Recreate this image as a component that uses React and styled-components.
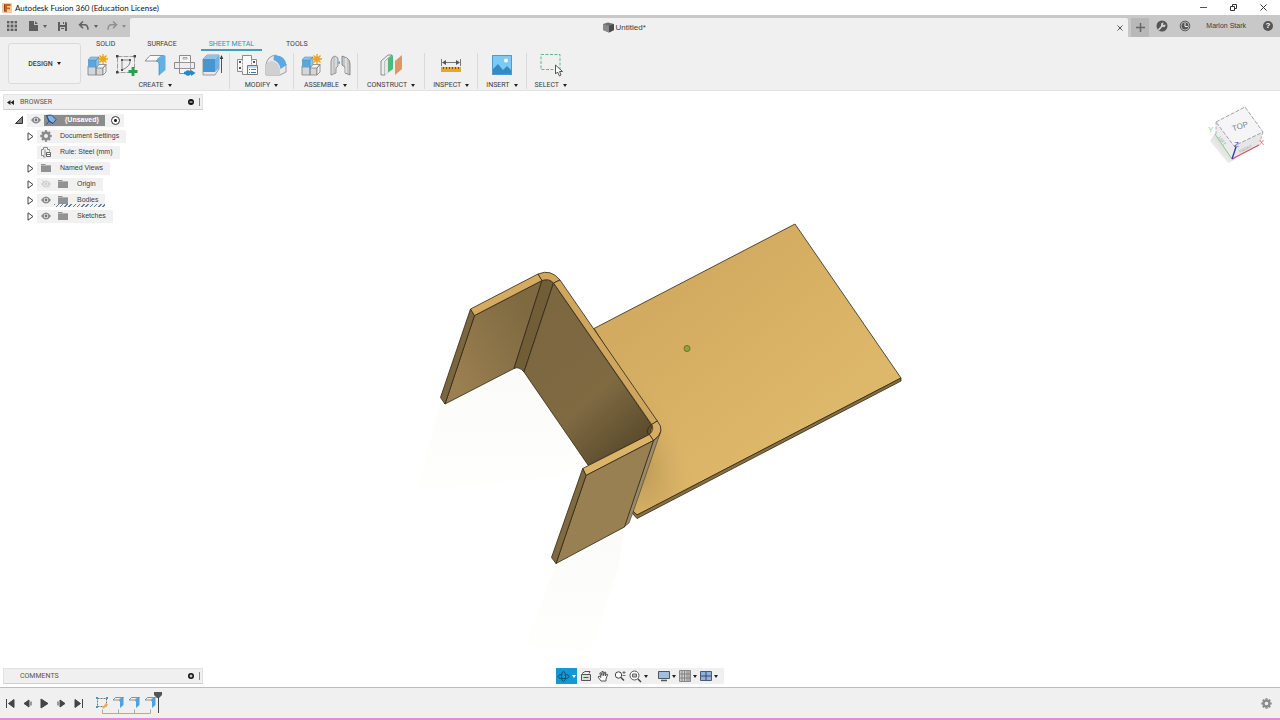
import React, { useState } from 'react';
import styled, { createGlobalStyle, css } from 'styled-components';

const TABS = ['SOLID', 'SURFACE', 'SHEET METAL', 'TOOLS'];

const TREE = [
  { name: 'Document Settings', icon: 'gear', arrow: true },
  { name: 'Rule: Steel (mm)', icon: 'rule' },
  { name: 'Named Views', icon: 'folder', arrow: true },
  { name: 'Origin', icon: 'folder', arrow: true, eye: 'off' },
  { name: 'Bodies', icon: 'folder', arrow: true, eye: 'on', hatched: true },
  { name: 'Sketches', icon: 'folder', arrow: true, eye: 'on' },
];

/* ---------- icons ---------- */

const Svg = ({ w = 12, h = w, children, ...rest }) => (
  <svg
    width={w}
    height={h}
    viewBox={`0 0 ${w} ${h}`}
    fill="none"
    aria-hidden="true"
    {...rest}
  >
    {children}
  </svg>
);

const Caret = ({ color = '#222' }) => (
  <Svg w={4} h={3}>
    <path d="M0 0h4L2 3z" fill={color} />
  </Svg>
);

const LogoIcon = () => (
  <Svg w={10}>
    <rect width="10" height="10" rx="1" fill="#f6c9a0" />
    <path d="M2 1h6.500v2H5v1.500h3v1.800H5V9H3z" fill="#c8641c" />
    <path d="M2 1l1 1v7l-1-1z" fill="#8c3e0c" />
  </Svg>
);

const AppsIcon = () => (
  <Svg w={10}>
    {[0, 4, 8].map(y =>
      [0, 4, 8].map(x => (
        <rect key={`${x}${y}`} x={x - 0.4} y={y - 0.4} width="2.800" height="2.800" fill="#5f5f5f" />
      ))
    )}
  </Svg>
);

const FileIcon = () => (
  <Svg>
    <path d="M2 1h5v4h4v6H2z" fill="#5f5f5f" />
    <path d="M8 1l3 3H8z" fill="#5f5f5f" />
  </Svg>
);

const SaveIcon = () => (
  <Svg w={11}>
    <path d="M1 1h8l1 1v8H1z" fill="#5f5f5f" />
    <path d="M3 1h5v3H3zM3 6h5v4H3z" fill="#c8c8c8" />
    <path d="M6 1h1v2H6zM4 7h3v1H4z" fill="#5f5f5f" />
  </Svg>
);

const UndoIcon = ({ color = '#5f5f5f', flip }) => (
  <Svg>
    <g transform={flip ? 'translate(12 0) scale(-1 1)' : undefined}>
      <path
        d="M5 1.500L1.500 4.800L5 8.200M2 4.800h4.500q3.500 0 3.500 5"
        stroke={color}
        strokeWidth="1.500"
      />
    </g>
  </Svg>
);

const DocCubeIcon = () => (
  <Svg w={11}>
    <path d="M0 2l5-1.500L11 2v6L6 10.500L0 8z" fill="#6e6e6e" />
    <path d="M0 2l6 2v6.500L0 8z" fill="#8a8a8a" />
    <path d="M6 4l5-2v6l-5 2.500z" fill="#4b4b4b" />
  </Svg>
);

const CrossIcon = ({ w = 7, color = '#333' }) => (
  <Svg w={w}>
    <path d={`M.5.5l${w - 1} ${w - 1}M${w - 0.5}.5l-${w - 1} ${w - 1}`} stroke={color} />
  </Svg>
);

const Sun = () => (
  <g stroke="#eda11f" strokeWidth="1.300">
    <path d="M18 1v10M13 6h10M14.500 2.500l7 7M21.500 2.500l-7 7" />
    <circle cx="18" cy="6" r="2.800" fill="#f0a41e" stroke="none" />
  </g>
);

const BoxesIcon = () => (
  <Svg w={24}>
    <path d="M3 13h8v9H3zM11 14h7v8h-7z" fill="#d6d6d6" stroke="#808080" strokeWidth=".8" />
    <path d="M11 15l3-3.500h7L18 15zM18 15l3-3.500V19l-3 3z" fill="#f4f4f4" stroke="#808080" strokeWidth=".8" />
    <path d="M3 7h8v7.500H3z" fill="#5ba7dc" />
    <path d="M3 7l2.500-3H14l-3 3zM11 7l3-3v7.500l-3 3z" fill="#8cc3ea" stroke="#4a85b0" strokeWidth=".5" />
    <Sun />
  </Svg>
);

const SketchIcon = () => (
  <Svg w={24}>
    <path d="M3.500 3.500h17v16h-17z" stroke="#8a8a8a" strokeWidth=".8" strokeDasharray="5 1" />
    <path d="M2 2h2.500v2.500H2zM19.500 2H22v2.500h-2.500zM2 18h2.500v2.500H2z" fill="#444" />
    <path d="M8 7h8q1 6-8 10z" stroke="#777" strokeWidth=".9" />
    <path d="M7 6h2v2H7zM15 6h2v2h-2zM7 16h2v2H7z" fill="#555" />
    <path d="M19 14v9M14.500 18.500h9" stroke="#25a04c" strokeWidth="2.800" />
  </Svg>
);

const FlangeIcon = () => (
  <Svg w={24}>
    <path d="M2 8l5-5.500h14L15 8z" fill="#fafafa" stroke="#777" strokeWidth=".8" />
    <path d="M13 8q3-5.500 7-5.500h2.500V17L16 22.500V11q0-3-3-3z" fill="#62b0e4" />
    <path d="M13 8q3 0 3 3v11.500" stroke="#397fae" strokeWidth=".6" />
  </Svg>
);

const UnfoldIcon = () => (
  <Svg w={24}>
    <path d="M7.500 2.500h11v18h-11z" fill="#f6f6f6" stroke="#808080" strokeWidth=".9" />
    <path d="M2.500 9.500h20v6h-20z" fill="#eee" stroke="#808080" strokeWidth=".9" />
    <path d="M7.500 9.500h11v6h-11zM11 4.500h4v1.500h-4z" stroke="#999" strokeWidth=".8" />
    <path d="M12 20h8" stroke="#2587cc" strokeWidth="2.500" />
    <circle cx="16" cy="20" r="2.800" fill="#2587cc" />
    <path d="M19 17l4.500 3-4.500 3z" fill="#2587cc" />
  </Svg>
);

const ExtrudeIcon = () => (
  <Svg w={24}>
    <path d="M2 6l4-4h12v14l-4 6H2z" fill="#e8e8e8" stroke="#888" strokeWidth=".8" />
    <path d="M2 6h12v13H2z" fill="#4795d1" />
    <path d="M2 6l4-4h12l-4 4z" fill="#8cc4ec" />
    <path d="M14 6l4-4v13l-4 4z" fill="#70b3e2" />
    <path d="M20.500 20V4" stroke="#555" />
    <path d="M18.800 6l1.700-4 1.700 4z" fill="#333" />
  </Svg>
);

const ModifyIcon = () => (
  <Svg w={24}>
    <path
      d="M7.500 2.500h9v4h5v12h-5v3h-9v-3h-5v-12h5z"
      fill="#f8f8f8"
      stroke="#808080"
      strokeWidth=".9"
    />
    <path d="M7.500 6.500v12M16.500 6.500v12" stroke="#999" strokeDasharray="2 1" />
    <path d="M4 8h2v2H4zM4 14h2v2H4zM18 8h2v2h-2z" fill="#555" />
    <path d="M12.500 12.500h10v9h-10z" fill="#fff" stroke="#777" />
    <path d="M13 13h9v2h-9z" fill="#bcd9ef" />
    <path d="M14 16.500h1M16 16.500h5M14 19.500h1M16 19.500h5" stroke="#3a78a8" />
  </Svg>
);

const BendIcon = () => (
  <Svg w={24}>
    <path d="M2 22V12q1-9 10-10l10 9v8l-6 3z" fill="#e9e9e9" stroke="#888" strokeWidth=".8" />
    <path d="M2 22V12q2-4 6-4 7 2 8 8v6z" fill="#d0d0d0" />
    <path d="M10 2.500q11-1 12.500 9.500l-6 4q-1-7-7-9z" fill="#5ba9df" />
  </Svg>
);

const JointIcon = () => (
  <Svg w={24}>
    <path d="M3 8q1-5 4-5l3 2v8l-2 2v5l-5 2z" fill="#d8d8d8" stroke="#808080" strokeWidth=".8" />
    <path d="M6 4v16" stroke="#aaa" strokeWidth=".8" />
    <path d="M14 3l5 2q3 2 3 6v11l-5-2v-6l-3-2z" fill="#c6c6c6" stroke="#777" strokeWidth=".8" />
    <path d="M18 5v15" stroke="#f4f4f4" />
    <path d="M9 10l3-2v3z" fill="#5ba9df" />
  </Svg>
);

const ConstructIcon = () => (
  <Svg w={24}>
    <path d="M2 8l7-6h4L6 8v14H2z" fill="#ededed" stroke="#777" strokeWidth=".8" />
    <path d="M6 8l8-6v14l-8 6z" fill="#4dba7c" />
    <path d="M6 8l3-2.300v14L6 22z" fill="#e4e9e5" />
    <path d="M16 8l7-6v14l-7 6z" fill="#e09565" />
  </Svg>
);

const MeasureIcon = () => (
  <Svg w={24}>
    <path d="M2.500 6v7M21.500 6v7M4 9.500h16" stroke="#777" />
    <path d="M3 9.500l4-2.500v5zM21 9.500l-4-2.500v5z" fill="#555" />
    <path d="M2 14h20v5H2z" fill="#eba42e" />
    <path d="M4.500 14v2M7.500 14v2M10.500 14v2M13.500 14v2M16.500 14v2M19.500 14v2" stroke="#7b551c" />
  </Svg>
);

const InsertIcon = () => (
  <Svg w={24}>
    <path d="M2 2h20v20H2z" fill="#7cc9f5" />
    <path d="M2 17l6-6 5 6 4-4 5 5v4H2z" fill="#3789c4" />
    <path d="M2.500 2.500h19v19h-19z" stroke="#4b9cd0" />
    <circle cx="16" cy="7.500" r="2" fill="#fff" />
  </Svg>
);

const SelectIcon = () => (
  <Svg w={24}>
    <path d="M2 1.500h19v15H2z" stroke="#65b78c" strokeDasharray="3 1.500" />
    <path d="M16.500 12v9l2-2 2 4 1.500-1-1.500-3.500h3z" fill="#fff" stroke="#444" strokeWidth=".9" />
  </Svg>
);

const Eye = ({ off }) => (
  <Svg w={10} h={8} opacity={off ? 0.3 : 1}>
    <path d="M0 4q5-7 10 0-5 7-10 0z" fill="#858585" />
    <circle cx="5" cy="4" r="2.300" fill="#eee" />
    <circle cx="5" cy="4" r="1.400" fill="#777" />
    {off && <path d="M1 0l8 8" stroke="#999" />}
  </Svg>
);

const Gear = ({ w = 12 }) => (
  <svg width={w} height={w} viewBox="0 0 12 12" fill="none" stroke="#8b8b8b" aria-hidden="true">
    <circle cx="6" cy="6" r="3.200" strokeWidth="2.400" />
    <path
      d="M6 .3v2M6 9.700v2M.3 6h2M9.700 6h2M2 2l1.400 1.400M8.600 8.600L10 10M10 2L8.600 3.400M3.400 8.600L2 10"
      strokeWidth="2.300"
    />
  </svg>
);

const FolderIcon = () => (
  <Svg w={12}>
    <path d="M1 2h4l1 1h5v7H1z" fill="#929292" />
    <path d="M1 3.500h10" stroke="#c9c9c9" strokeWidth=".6" />
  </Svg>
);

const RuleIcon = () => (
  <Svg w={12}>
    <path d="M3.500 1.500h4v2h2v2M3.500 1.500v2h-2v6h2v1.500h2M5 3.500v6" stroke="#888" />
    <path d="M6.500 6.500h4v4h-4z" fill="#fff" stroke="#666" />
    <path d="M7 8.500h3" stroke="#666" />
  </Svg>
);

const ComponentIcon = () => (
  <Svg w={12}>
    <path d="M1.500 1.500l5-.5L11 5.500 8 9.500 4 7z" fill="#7fb2e6" stroke="#1d4f86" strokeWidth=".9" />
    <path d="M1.500 1.500L4 7l-2.500 3.500M4 7l4 2.500" stroke="#1d4f86" strokeWidth=".9" />
  </Svg>
);

const ArrowIcon = () => (
  <Svg w={7} h={9}>
    <path d="M1 .8L6 4.500 1 8.200z" fill="#fff" stroke="#444" />
  </Svg>
);

const OpenArrowIcon = () => (
  <Svg w={8}>
    <path d="M7.500.5v7h-7z" fill="#888" stroke="#333" />
  </Svg>
);

const RewindIcon = () => (
  <Svg w={7} h={5}>
    <path d="M3.500 0v5L0 2.500zM7 0v5L3.500 2.500z" fill="#222" />
  </Svg>
);

const RoundIcon = ({ plus }) => (
  <Svg w={6}>
    <circle cx="3" cy="3" r="3" fill="#111" />
    <path d={plus ? 'M1.500 3h3M3 1.500v3' : 'M1.500 3h3'} stroke="#fff" />
  </Svg>
);

const TimelineFlange = ({ last }) => (
  <Svg w={16} h={18}>
    <path d="M3 4l2.500-2.500h8L10 4z" fill="#eee" stroke="#777" strokeWidth=".8" />
    <path d="M9 4q1-2.500 4.500-2.500V9L10 12V6z" fill="#4da3dc" />
    <path d={last ? 'M0 17.500h8.500v-4' : 'M0 17.500h16M8.500 17.500v-4'} stroke="#aaa" />
  </Svg>
);

/* ---------- data that carries icons ---------- */

const GROUPS = [
  {
    name: 'CREATE',
    pad: 4,
    tools: [
      ['New component', BoxesIcon],
      ['Create sketch', SketchIcon],
      ['Flange', FlangeIcon],
      ['Unfold', UnfoldIcon],
      ['Extrude', ExtrudeIcon],
    ],
  },
  { name: 'MODIFY', pad: 5, tools: [['Sheet metal rules', ModifyIcon], ['Fillet', BendIcon]] },
  { name: 'ASSEMBLE', pad: 5, tools: [['Assemble component', BoxesIcon], ['Joint', JointIcon]] },
  { name: 'CONSTRUCT', pad: 9, tools: [['Offset plane', ConstructIcon]] },
  { name: 'INSPECT', pad: 8, tools: [['Measure', MeasureIcon]] },
  { name: 'INSERT', pad: 8, tools: [['Insert image', InsertIcon]] },
  { name: 'SELECT', pad: 8, tools: [['Select', SelectIcon]] },
];

const PLAYBACK = [
  ['Go to start', 'M1.500 1v9M9 1.500v8L3.500 5.500z'],
  ['Step back', 'M7 2v7L2 5.500zM9 3.500v4'],
  ['Play', 'M2 1v9l7-4.500z'],
  ['Step forward', 'M4 2v7l5-3.500zM2 3.500v4'],
  ['Go to end', 'M9.500 1v9M2 1.500v8l5.500-4z'],
];

/* ---------- parts ---------- */

function Model() {
  return (
    <Scene viewBox="0 91 1280 596" role="img" aria-label="Sheet metal part">
      <defs>
        <linearGradient id="plate" gradientUnits="userSpaceOnUse" x1="640" y1="320" x2="760" y2="470">
          <stop offset="0" stopColor="#d2ab60" />
          <stop offset="1" stopColor="#deb86a" />
        </linearGradient>
        <radialGradient
          id="shade"
          gradientUnits="userSpaceOnUse"
          cx="0"
          cy="0"
          r="100"
          gradientTransform="translate(632 455) rotate(-25) scale(.5 1)"
        >
          <stop offset="0" stopColor="#a18449" stopOpacity=".7" />
          <stop offset="1" stopColor="#cda75e" stopOpacity="0" />
        </radialGradient>
        <linearGradient id="left" gradientUnits="userSpaceOnUse" x1="450" y1="370" x2="535" y2="325">
          <stop offset="0" stopColor="#9a7f50" />
          <stop offset="1" stopColor="#7e6941" />
        </linearGradient>
        <linearGradient id="web" gradientUnits="userSpaceOnUse" x1="535" y1="320" x2="640" y2="440">
          <stop offset="0" stopColor="#7b6740" />
          <stop offset=".6" stopColor="#7f6a42" />
          <stop offset="1" stopColor="#5c4c2d" />
        </linearGradient>
        <linearGradient id="floor" x1="0" y1="0" x2="0" y2="1">
          <stop offset="0" stopColor="#f8f8f3" />
          <stop offset="1" stopColor="#fefefc" />
        </linearGradient>
      </defs>
      <path d="M440 405l75-36 12 8 56 87-34 14-132 12z" fill="url(#floor)" opacity=".6" />
      <path d="M556 564l68-35-6 40-28 84-64-8z" fill="url(#floor)" opacity=".6" />
      <g stroke="#2e2616" strokeWidth=".8" strokeLinejoin="round">
        <path d="M594 328.500L795 224l106 154-264 137-4-4 20-90z" fill="url(#plate)" />
        <path d="M594 328.500L720 263 740 470 637 515l-4-4z" fill="url(#shade)" stroke="none" />
        <path d="M901 378v3L637 518.500l-4.500-5 .5-2.500 4 4z" fill="#8a7040" />
        <path d="M474.500 315.500l67.500-35-28 88-69 35.500z" fill="url(#left)" />
        <path d="M470.500 309l4 6.500L445 404l-4.500-6.500z" fill="#7c663e" />
        <path d="M542 280.500q7-2 11.500 2.500L524 372q-5-6-10-3.500z" fill="#725e36" />
        <path d="M553.500 283L652 426l-3 9-61 30-64-93z" fill="url(#web)" />
        <path d="M652 424q-8 7-2.700 11" fill="#5f502f" />
        <path
          d="M653.500 440.500q8-4 7.200-12l-.7 5L633.500 511l-4.500 12-5 4z"
          fill="#9b8a6a"
          strokeWidth=".5"
        />
        <path d="M470.500 309l67.500-35 4 6.500-67.500 35z" fill="#d4ab61" />
        <path d="M538 274q13-5.500 22 6l-6.500 3q-4.500-5-11.500-2.500z" fill="#d0a75c" />
        <path d="M560 280l97.300 141-5.600 3.500-98.200-141.500z" fill="#cfa65d" />
        <path d="M657.300 421q9 10-3.800 19.500l-4.200-6q5.500-5 2.400-10z" fill="#d6ae63" />
        <path d="M582.700 468.500l66.600-34 4.200 6-67.500 35z" fill="#dcb468" />
        <path d="M586 475.500l67.500-35-29 86.500-68.500 36.500z" fill="#988053" />
        <path d="M582.700 468.500l3.300 7-30 88-4.500-6z" fill="#806a40" />
      </g>
      <circle cx="687" cy="348.500" r="3" fill="#92a23c" stroke="#667525" />
    </Scene>
  );
}

const ViewCube = () => (
  <CubeSvg viewBox="0 0 64 64" role="img" aria-label="View cube">
    <defs>
      <linearGradient id="cubeShadow" x1="1" y1="0" x2="0" y2="1">
        <stop offset=".4" stopColor="#bbb" />
        <stop offset="1" stopColor="#fff" />
      </linearGradient>
    </defs>
    <path d="M11 32L6 40l18 22 8-4z" fill="url(#cubeShadow)" opacity=".5" />
    <path d="M12 21l18 24-2 13-16-24z" fill="#ececee" />
    <path d="M30 45l29-14-4 13-27 14z" fill="#e6e6e8" />
    <path d="M12 21L41 6l18 25-29 14z" fill="#f5f5f7" stroke="#8c8c8c" strokeDasharray="4 1.500" strokeWidth=".8" />
    <path d="M12 21v12M59 31l-3 10" stroke="#a5a5a5" strokeDasharray="3 1.500" strokeWidth=".8" />
    <path d="M11 33l17 25" stroke="#7fd084" />
    <path d="M28 58l27-14" stroke="#cf5058" strokeWidth="1.200" />
    <path d="M28 58l4-12" stroke="#3532ad" strokeWidth="1.300" />
    <text x="36" y="28" fontSize="8" fill="#808084" textAnchor="middle" transform="rotate(-16 36 25)">
      TOP
    </text>
    <text x="15" y="37" fontSize="4" fill="#999" transform="rotate(55 15 36)">LEFT</text>
    <text x="36" y="52" fontSize="4" fill="#999" transform="rotate(-26 36 52)">FRONT</text>
    <text x="4" y="31" fontSize="8" fill="#83dd88">Y</text>
    <text x="30" y="46" fontSize="8" fill="#4a48bb">Z</text>
    <text x="55" y="44" fontSize="8" fill="#e5686d">X</text>
  </CubeSvg>
);

function BrowserPanel() {
  return (
    <Panel>
      <PanelHeader>
        <PanelButton aria-label="Collapse browser">
          <RewindIcon />
        </PanelButton>
        <PanelTitle>BROWSER</PanelTitle>
        <PanelButton aria-label="Minimize browser">
          <RoundIcon />
        </PanelButton>
        <Grip />
      </PanelHeader>
      <Tree>
        <TreeRow>
          <ArrowButton $root aria-label="Collapse (Unsaved)">
            <OpenArrowIcon />
          </ArrowButton>
          <Entry>
            <Slot>
              <Eye />
            </Slot>
            <RootName>
              <ComponentIcon />
              (Unsaved)
            </RootName>
            <ActiveRadio type="radio" aria-label="Activate (Unsaved)" defaultChecked />
          </Entry>
        </TreeRow>
        {TREE.map(item => (
          <TreeRow key={item.name} $child>
            <ArrowButton aria-label={`Expand ${item.name}`} disabled={!item.arrow}>
              {item.arrow && <ArrowIcon />}
            </ArrowButton>
            <Entry>
              {item.eye && (
                <Slot>
                  <Eye off={item.eye === 'off'} />
                </Slot>
              )}
              <Node $hatched={item.hatched}>
                <Slot>
                  {item.icon === 'gear' && <Gear />}
                  {item.icon === 'rule' && <RuleIcon />}
                  {item.icon === 'folder' && <FolderIcon />}
                </Slot>
                <NodeName>{item.name}</NodeName>
              </Node>
            </Entry>
          </TreeRow>
        ))}
      </Tree>
    </Panel>
  );
}

function NavBar() {
  return (
    <NavTools aria-label="Navigation">
      <NavButton $active $caret aria-label="Orbit">
        <Svg w={13}>
          <path d="M4 4.500q-3 .5-3 2t3 2h5q3-.5 3-2t-3-2" stroke="#12516f" />
          <path d="M4.500 6.500q0-5 2-5t2 5-2 5-2-5" stroke="#12516f" />
        </Svg>
        <Caret color="#fff" />
      </NavButton>
      <NavButton aria-label="Look at">
        <Svg w={12}>
          <path d="M1.500 4.500h9v6h-9z" fill="#ddd" stroke="#555" />
          <path d="M2 3.500l3-2h5l-1 2M3.500 7.500h5" stroke="#555" />
        </Svg>
      </NavButton>
      <NavButton aria-label="Pan">
        <Svg w={12}>
          <path
            d="M4 11L1 7l1-1 2 1.500L2.800 3l1-.4L5 5.500 5 1.500h1.200L6.500 5.500 7.800 2l1 .3L8.200 6l1.500-2 1 .5L9 9v2z"
            fill="#fff"
            stroke="#444"
            strokeWidth=".9"
          />
        </Svg>
      </NavButton>
      <NavButton aria-label="Zoom">
        <Svg w={12}>
          <circle cx="4.500" cy="5" r="3.200" fill="#fff" stroke="#444" />
          <path d="M7 7.500l3 3" stroke="#444" strokeWidth="1.500" />
          <path d="M8.500 2.500h3M10 1v3M8.500 5.500h3" stroke="#555" strokeWidth=".8" />
        </Svg>
      </NavButton>
      <NavButton $caret aria-label="Fit">
        <Svg w={13}>
          <circle cx="5.500" cy="5.500" r="4.500" fill="#fff" stroke="#555" />
          <path d="M3.500 4h4v3h-4z" fill="#bbb" stroke="#666" />
          <path d="M9 9l3 3" stroke="#444" strokeWidth="1.500" />
        </Svg>
        <Caret />
      </NavButton>
      <NavGap />
      <NavButton $caret aria-label="Display settings">
        <Svg w={12}>
          <path d="M.5 1.500h11v7H.5z" fill="#9fc0e3" stroke="#555" />
          <path d="M3 10.500h6" stroke="#555" strokeWidth="1.500" />
        </Svg>
        <Caret />
      </NavButton>
      <NavButton $caret aria-label="Grid and snaps">
        <Svg w={12}>
          <path d="M.5.5h11v11H.5z" fill="#ccc" stroke="#888" />
          <path d="M3 1v10M5.500 1v10M8 1v10M10 1v10M1 4h10M1 8h10" stroke="#777" strokeWidth=".8" />
        </Svg>
        <Caret />
      </NavButton>
      <NavButton $caret aria-label="Viewports">
        <Svg w={12}>
          <path d="M.5 1.500h11v9H.5z" fill="#8db4dc" stroke="#557" />
          <path d="M1 6h10M6 2v8" stroke="#446" />
        </Svg>
        <Caret />
      </NavButton>
    </NavTools>
  );
}

function Timeline() {
  return (
    <Footer>
      {PLAYBACK.map(([label, d]) => (
        <PlayButton key={label} aria-label={label}>
          <Svg w={11}>
            <path d={d} fill="#444" stroke="#444" />
          </Svg>
        </PlayButton>
      ))}
      <Features>
        <FeatureButton aria-label="Sketch 1">
          <Svg w={16} h={18}>
            <path d="M3.500 2.500h9v8h-9z" stroke="#777" strokeDasharray="2 1" />
            <path d="M2 1h2v2H2zM12 1h2v2h-2zM2 10h2v2H2z" fill="#4b98bd" />
            <path d="M8 12l4-5 2 1.500-4 4z" fill="#efac55" />
            <path d="M8.500 13.500v4H16" stroke="#aaa" />
          </Svg>
        </FeatureButton>
        {[1, 2, 3].map(n => (
          <FeatureButton key={n} aria-label={`Flange ${n}`}>
            <TimelineFlange last={n === 3} />
          </FeatureButton>
        ))}
        <Marker>
          <Svg w={8} h={22}>
            <path d="M0 1h8v3L5 7H3L0 4z" fill="#555" />
            <path d="M4.500 6v16" stroke="#444" />
          </Svg>
        </Marker>
      </Features>
      <SettingsButton aria-label="Timeline settings">
        <Gear w={11} />
      </SettingsButton>
    </Footer>
  );
}

export default function App() {
  const [tab, setTab] = useState('SHEET METAL');

  return (
    <>
      <GlobalStyle />
      <Page>
        <TitleBar>
          <LogoIcon />
          <WindowTitle>Autodesk Fusion 360 (Education License)</WindowTitle>
          <WindowButton aria-label="Minimize">
            <Svg w={7}>
              <path d="M0 3.500h7" stroke="#555" />
            </Svg>
          </WindowButton>
          <WindowButton aria-label="Restore">
            <Svg w={7}>
              <path d="M.5 2.500h4v4h-4zM2.500 2.500v-2h4v4h-2" stroke="#333" />
            </Svg>
          </WindowButton>
          <WindowButton aria-label="Close">
            <CrossIcon />
          </WindowButton>
        </TitleBar>

        <TabStrip>
          <QuickButton aria-label="Data panel">
            <AppsIcon />
          </QuickButton>
          <QuickButton $caret aria-label="File">
            <FileIcon />
            <Caret color="#5f5f5f" />
          </QuickButton>
          <QuickButton aria-label="Save">
            <SaveIcon />
          </QuickButton>
          <QuickButton $caret aria-label="Undo">
            <UndoIcon />
            <Caret color="#5f5f5f" />
          </QuickButton>
          <QuickButton $caret aria-label="Redo">
            <UndoIcon flip color="#8f8f8f" />
            <Caret color="#8f8f8f" />
          </QuickButton>
          <DocumentTab>
            <DocumentName>
              <DocCubeIcon />
              Untitled*
            </DocumentName>
            <CloseTab aria-label="Close document">
              <CrossIcon w={6} color="#555" />
            </CloseTab>
          </DocumentTab>
          <AddButton aria-label="New document">
            <Svg w={9}>
              <path d="M4.500 0v9M0 4.500h9" stroke="#666" strokeWidth="1.500" />
            </Svg>
          </AddButton>
          <QuickButton aria-label="Extensions">
            <Svg w={12}>
              <circle cx="6" cy="6" r="5.500" fill="#555" />
              <path d="M2.500 10l4-4.500" stroke="#d0d0d0" strokeWidth="1.800" />
              <path d="M9.500 4.500A2.300 2.300 0 1 1 7.500 2.500L7 5z" fill="#d0d0d0" />
            </Svg>
          </QuickButton>
          <QuickButton aria-label="Job status">
            <Svg w={12}>
              <circle cx="6" cy="6" r="4.800" fill="#555" stroke="#555" />
              <circle cx="6" cy="6" r="4" stroke="#c8c8c8" strokeWidth=".8" />
              <path d="M6 3v3.500h2.800" stroke="#eee" />
            </Svg>
          </QuickButton>
          <UserButton>Marlon Stark</UserButton>
          <HelpButton aria-label="Help">
            <HelpBadge>?</HelpBadge>
          </HelpButton>
        </TabStrip>

        <Ribbon>
          <DesignButton>
            DESIGN <Caret />
          </DesignButton>
          <RibbonBody>
            <RibbonTabs role="tablist">
              {TABS.map(name => (
                <RibbonTab
                  key={name}
                  role="tab"
                  aria-selected={tab === name}
                  $active={tab === name}
                  onClick={() => setTab(name)}
                >
                  {name}
                </RibbonTab>
              ))}
            </RibbonTabs>
            <Groups>
              {GROUPS.map(group => (
                <Group key={group.name} $pad={group.pad}>
                  <Tools>
                    {group.tools.map(([label, Icon]) => (
                      <ToolButton key={label} aria-label={label}>
                        <Icon />
                      </ToolButton>
                    ))}
                  </Tools>
                  <GroupLabel>
                    {group.name} <Caret />
                  </GroupLabel>
                </Group>
              ))}
            </Groups>
          </RibbonBody>
        </Ribbon>

        <Viewport>
          <Model />
          <ViewportTop>
            <BrowserPanel />
            <ViewCube />
          </ViewportTop>
          <ViewportBottom>
            <PanelHeader>
              <PanelTitle $indent>COMMENTS</PanelTitle>
              <PanelButton aria-label="Expand comments">
                <RoundIcon plus />
              </PanelButton>
              <Grip />
            </PanelHeader>
            <NavBar />
          </ViewportBottom>
        </Viewport>

        <Timeline />
      </Page>
    </>
  );
}

/* ---------- styles ---------- */

const GlobalStyle = createGlobalStyle`
  * {
    box-sizing: border-box;
  }

  body {
    margin: 0;
    color: #3c3c3c;
    background-color: #fff;
    font-family: 'Liberation Sans', Arial, sans-serif;
    font-size: 7px;
    line-height: 10px;
  }

  button {
    display: flex;
    align-items: center;
    justify-content: center;
    flex-shrink: 0;
    margin: 0;
    padding: 0;
    border: 0;
    background: none;
    color: inherit;
    font: inherit;
  }

  svg {
    display: block;
    flex-shrink: 0;
  }
`;

const uiFont = css`
  font-family: Roboto, 'Liberation Sans', sans-serif;
`;

const Page = styled.div`
  display: flex;
  flex-direction: column;
  min-height: 100vh;
`;

const TitleBar = styled.header`
  display: flex;
  align-items: center;
  height: 15px;
  padding: 0 2px;
`;

const WindowTitle = styled.h1`
  flex: 1;
  margin: 0 0 0 3px;
  color: #111;
  font-family: Lato, 'Open Sans', sans-serif;
  font-size: 8px;
  font-weight: 400;
`;

const WindowButton = styled.button`
  width: 30px;
  height: 15px;
`;

const TabStrip = styled.div`
  display: flex;
  height: 22px;
  background-color: #c8c8c8;
`;

const QuickButton = styled.button`
  gap: 4px;
  width: ${({ $caret }) => ($caret ? '28px' : '23px')};
`;

const DocumentTab = styled.div`
  display: flex;
  flex: 1;
  align-items: center;
  margin-top: 3px;
  padding-left: 6px;
  border-radius: 2px 2px 0 0;
  background-color: #f0f0f0;
`;

const DocumentName = styled.span`
  display: flex;
  flex: 1;
  align-items: center;
  justify-content: center;
  gap: 2px;
  font-size: 8px;
`;

const CloseTab = styled.button`
  width: 16px;
  height: 16px;
`;

const AddButton = styled.button`
  width: 18px;
  margin: 3px 1px 0 3px;
  background-color: #b8b8b8;
`;

const UserButton = styled.button`
  padding: 0 10px;
`;

const HelpButton = styled.button`
  width: 24px;
`;

const HelpBadge = styled.span`
  width: 10px;
  height: 10px;
  border-radius: 50%;
  background-color: #555;
  color: #fff;
  font-size: 8px;
  font-weight: bold;
  text-align: center;
`;

const Ribbon = styled.div`
  display: flex;
  height: 54px;
  padding-left: 8px;
  border-bottom: 1px solid #e2e2e2;
  background-color: #f0f0f0;
  ${uiFont}
`;

const DesignButton = styled.button`
  gap: 4px;
  width: 73px;
  height: 41px;
  margin-top: 6px;
  border: 1px solid #dadada;
  border-radius: 3px;
  background-color: #f2f2f2;
  font-weight: 500;
`;

const RibbonBody = styled.div`
  flex: 1;
`;

const RibbonTabs = styled.div`
  display: flex;
  gap: 16px;
  height: 14px;
  padding-left: 7px;
`;

const RibbonTab = styled.button`
  padding: 2px 8px 0;
  border-bottom: 2px solid transparent;

  ${({ $active }) =>
    $active &&
    css`
      border-color: #3f9dc6;
      color: #2e93bf;
    `}
`;

const Groups = styled.div`
  display: flex;
  margin-top: 2px;
`;

const Group = styled.div`
  display: flex;
  flex-direction: column;
  align-items: center;
  height: 36px;
  padding: 0 ${({ $pad }) => $pad}px;
  border-right: 1px solid #d9d9d9;

  &:last-child {
    border-right: 0;
  }
`;

const Tools = styled.div`
  display: flex;
  gap: 5px;
`;

const ToolButton = styled.button`
  width: 24px;
  height: 24px;
`;

const GroupLabel = styled.button`
  gap: 4px;
  height: 12px;
  padding-top: 4px;
`;

const Viewport = styled.main`
  display: flex;
  flex: 1;
  flex-direction: column;
  justify-content: space-between;
  position: relative;
  padding: 3px;
`;

const Scene = styled.svg`
  position: absolute;
  inset: 0;
  width: 100%;
  height: 100%;
`;

const ViewportTop = styled.div`
  display: flex;
  align-items: flex-start;
  justify-content: space-between;
  position: relative;
`;

const ViewportBottom = styled.div`
  display: grid;
  grid-template-columns: 1fr auto 1fr;
  align-items: center;
  position: relative;
`;

const CubeSvg = styled.svg`
  width: 64px;
  height: 64px;
  margin: 7px 9px 0 0;
`;

const Panel = styled.section`
  width: 200px;
`;

const PanelHeader = styled.div`
  display: flex;
  align-items: center;
  width: 200px;
  height: 16px;
  padding-right: 1px;
  border: 1px solid #e2e2e2;
  border-bottom-color: #cfcfcf;
  background-color: #f0f0f0;
  ${uiFont}
`;

const PanelTitle = styled.h2`
  flex: 1;
  margin: 0;
  padding-left: ${({ $indent }) => ($indent ? '16px' : '4px')};
  color: #555;
  font-size: 7px;
  font-weight: 400;
`;

const PanelButton = styled.button`
  width: 12px;
  height: 12px;
`;

const Grip = styled.span`
  width: 2px;
  height: 8px;
  margin-left: 2px;
  border-left: 1px solid #888;
`;

const Tree = styled.ul`
  margin: 2px 0 0;
  padding: 0;
  list-style: none;
`;

const TreeRow = styled.li`
  display: flex;
  align-items: center;
  height: 16px;
  padding-left: ${({ $child }) => ($child ? '21px' : '8px')};
`;

const ArrowButton = styled.button`
  width: ${({ $root }) => ($root ? '16px' : '13px')};
  height: 12px;
`;

const Entry = styled.div`
  display: flex;
  align-items: center;
  height: 13px;
  background-color: #f1f1f1;
`;

const Slot = styled.span`
  display: flex;
  justify-content: center;
  width: 17px;
`;

const RootName = styled.span`
  display: flex;
  align-items: center;
  gap: 8px;
  height: 11px;
  padding: 0 6px 0 1px;
  background-color: #8c8c8c;
  color: #fff;
  font-weight: bold;
`;

const ActiveRadio = styled.input`
  appearance: none;
  width: 9px;
  height: 9px;
  margin: 0 4px 0 6px;
  border: 1px solid #333;
  border-radius: 50%;
  background: radial-gradient(circle, #222 0 1px, #fff 2px);
`;

const Node = styled.span`
  display: flex;
  align-items: center;
  height: 13px;

  ${({ $hatched }) =>
    $hatched &&
    css`
      background: repeating-linear-gradient(
          135deg,
          #5f7f9c 0 1px,
          transparent 1px 3px
        )
        bottom / 100% 3px no-repeat;
    `}
`;

const NodeName = styled.span`
  padding: 0 7px 0 6px;
`;

const NavTools = styled.nav`
  display: flex;
  height: 16px;
  padding-right: 5px;
  background-color: #f0f0f0;
`;

const NavButton = styled.button`
  gap: 2px;
  width: ${({ $caret }) => ($caret ? '21px' : '17px')};

  ${({ $active }) =>
    $active &&
    css`
      background-color: #1497d3;
    `}
`;

const NavGap = styled.span`
  width: 7px;
`;

const Footer = styled.footer`
  display: flex;
  align-items: center;
  height: 33px;
  padding: 0 6px 0 2px;
  border-top: 1px solid #bdbdbd;
  border-bottom: 2px solid #e389e0;
  background-color: #f0f0f0;
`;

const PlayButton = styled.button`
  width: 17px;
  height: 16px;
`;

const Features = styled.div`
  display: flex;
  position: relative;
  margin: 4px auto 0 7px;
`;

const FeatureButton = styled.button`
  width: 16px;
  height: 18px;
`;

const Marker = styled.span`
  position: absolute;
  top: -5px;
  right: -4px;
`;

const SettingsButton = styled.button`
  width: 16px;
  height: 16px;
`;
